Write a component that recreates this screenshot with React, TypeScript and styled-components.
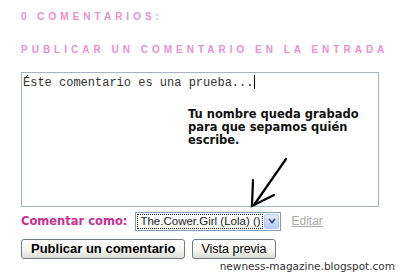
import React from 'react';
import styled, { createGlobalStyle } from 'styled-components';

const GlobalStyle = createGlobalStyle`
  html, body {
    margin: 0;
    padding: 0;
    background: #ffffff;
  }
  body {
    font-family: "Liberation Sans", Arial, sans-serif;
  }
`;

const Page = styled.div`
  width: 400px;
  height: 272px;
  box-sizing: border-box;
  padding: 11px 0 0 21px;
  display: flex;
  flex-direction: column;
  overflow: hidden;
`;

const SectionTitle = styled.h4<{ $gap: number }>`
  margin: 0 0 ${(p) => p.$gap}px;
  font-family: "Liberation Sans", Arial, sans-serif;
  font-size: 10px;
  line-height: 12px;
  font-weight: 700;
  letter-spacing: 4px;
  color: #e891d0;
  text-transform: uppercase;
  white-space: nowrap;
`;

const CommentArea = styled.div`
  position: relative;
  width: 358px;
  height: 135px;
  box-sizing: border-box;
  border: 1px solid #a7b4c0;
  padding: 2px 1px;
  font-family: "Liberation Mono", "Courier New", monospace;
  font-size: 12px;
  line-height: 14px;
  color: #333333;
`;

const Caret = styled.span`
  display: inline-block;
  width: 1px;
  height: 14px;
  margin-left: 1px;
  background: #000;
  vertical-align: -3px;
`;

const Annotation = styled.div`
  position: absolute;
  left: 166px;
  top: 35px;
  font-family: "DejaVu Sans", sans-serif;
  font-size: 11.5px;
  font-weight: 700;
  line-height: 13px;
  color: #111;
  white-space: nowrap;
`;

const ArrowMark = styled.svg`
  position: absolute;
  left: 222px;
  top: 84px;
  overflow: visible;
`;

const AuthorRow = styled.div`
  display: flex;
  align-items: center;
  margin-top: 4px;
  height: 20px;
`;

const AuthorLabel = styled.span`
  font-family: "DejaVu Sans", Verdana, sans-serif;
  font-size: 11.5px;
  font-weight: 700;
  color: #c7318f;
  margin-right: 8px;
`;

const FakeSelect = styled.div`
  display: flex;
  align-items: center;
  box-sizing: border-box;
  width: 146px;
  height: 19px;
  border: 1px solid #7f9db9;
  padding: 1px;
  background: #fff;
`;

const SelectText = styled.span`
  flex: 1;
  height: 15px;
  box-sizing: border-box;
  border: 1px dotted #222;
  font-size: 11.5px;
  line-height: 13px;
  padding-left: 2px;
  color: #222;
  white-space: nowrap;
  overflow: hidden;
`;

const SelectArrow = styled.span`
  width: 15px;
  height: 15px;
  margin-left: 1px;
  box-sizing: border-box;
  border: 1px solid #b4c8f0;
  border-radius: 2px;
  background: linear-gradient(#e1eafe, #b7cbf6);
  display: flex;
  align-items: center;
  justify-content: center;
`;

const EditLink = styled.a`
  margin-left: 10px;
  font-size: 12px;
  color: #a8a8a8;
  text-decoration: underline;
`;

const ButtonRow = styled.div`
  display: flex;
  gap: 7px;
  margin-top: 8px;
`;

const Button = styled.button<{ $bold?: boolean }>`
  height: 20px;
  box-sizing: border-box;
  padding: 0 ${(p) => (p.$bold ? 9 : 8)}px;
  border: 1px solid #707a86;
  border-radius: 3px;
  background: linear-gradient(#ffffff 0%, #f4f4f0 60%, #dcdcd4 100%);
  font-family: "Liberation Sans", Arial, sans-serif;
  font-size: ${(p) => (p.$bold ? 13 : 12.5)}px;
  font-weight: ${(p) => (p.$bold ? 700 : 400)};
  color: #000;
  line-height: 18px;
`;

const Watermark = styled.div`
  align-self: flex-end;
  margin-right: 5px;
  margin-top: 1px;
  font-family: "DejaVu Sans", sans-serif;
  font-size: 10.5px;
  line-height: 12px;
  color: #333;
`;

const App: React.FC = () => {
  return (
    <Page>
      <GlobalStyle />
      <SectionTitle $gap={21}>0 comentarios:</SectionTitle>
      <SectionTitle $gap={16}>Publicar un comentario en la entrada</SectionTitle>

      <CommentArea>
        Éste comentario es una prueba...
        <Caret />
        <Annotation>
          Tu nombre queda grabado
          <br />
          para que sepamos quién
          <br />
          escribe.
        </Annotation>
        <ArrowMark width="48" height="52" viewBox="0 0 48 52">
          <g stroke="#000" strokeWidth="2.2" fill="none" strokeLinecap="round">
            <path d="M42 2 L10 48" />
            <path d="M9 23 L8 49 L30 38" />
          </g>
        </ArrowMark>
      </CommentArea>

      <AuthorRow>
        <AuthorLabel>Comentar como:</AuthorLabel>
        <FakeSelect>
          <SelectText>The.Cower.Girl (Lola) ()</SelectText>
          <SelectArrow>
            <svg width="8" height="6" viewBox="0 0 8 6">
              <path d="M1 1 L4 4.5 L7 1" stroke="#3d5685" strokeWidth="1.8" fill="none" />
            </svg>
          </SelectArrow>
        </FakeSelect>
        <EditLink>Editar</EditLink>
      </AuthorRow>

      <ButtonRow>
        <Button $bold>Publicar un comentario</Button>
        <Button>Vista previa</Button>
      </ButtonRow>

      <Watermark>newness-magazine.blogspot.com</Watermark>
    </Page>
  );
};

export default App;
